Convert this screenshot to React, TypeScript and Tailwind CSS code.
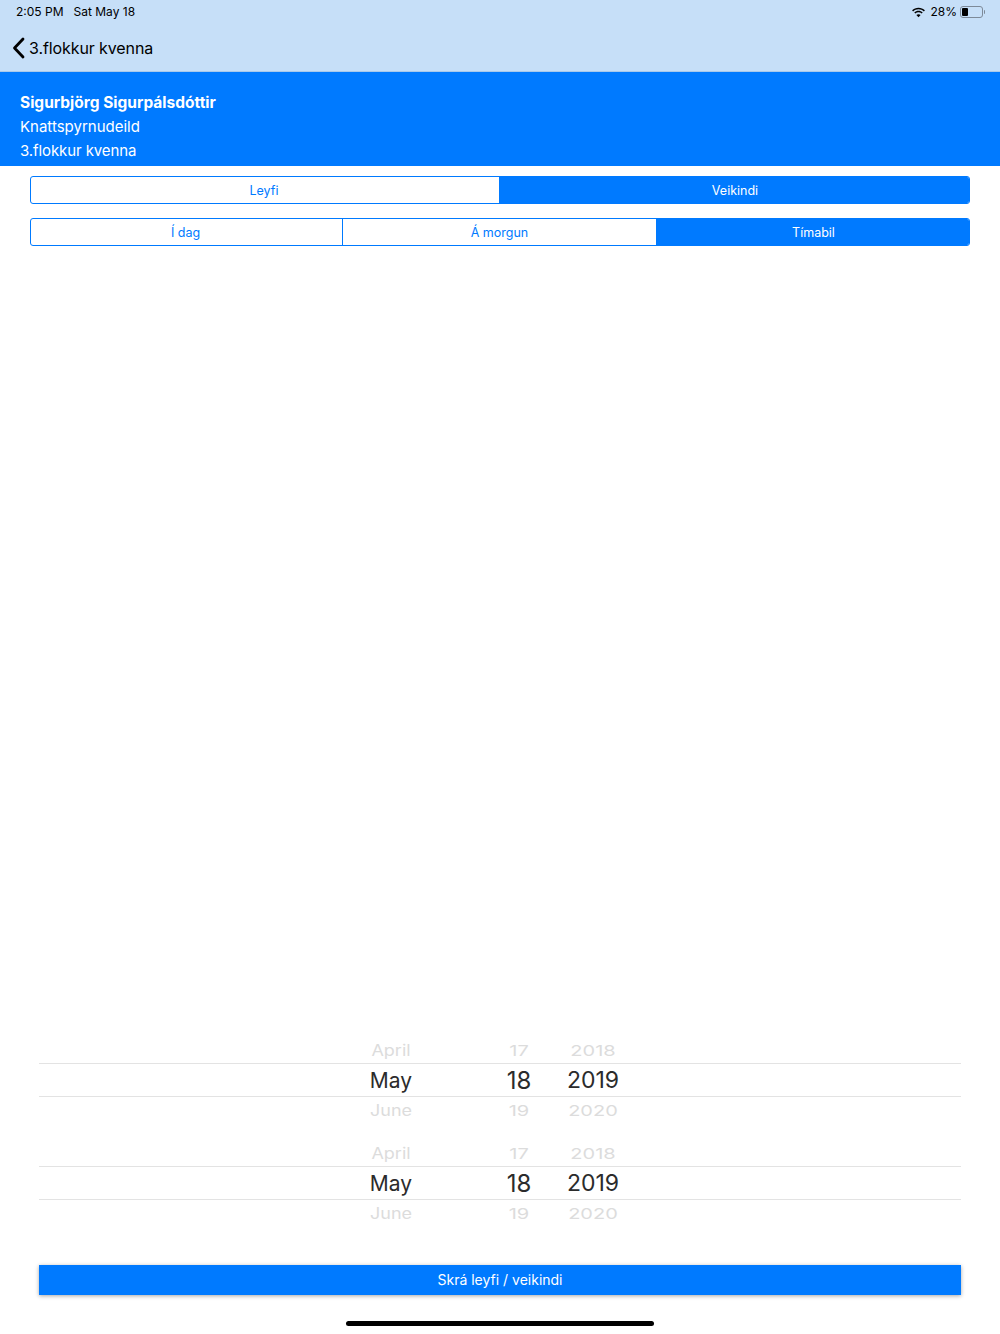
import { ReactNode } from "react";

function WifiIcon() {
  return (
    <svg className="mr-[1px]" width="15" height="11" viewBox="0 0 15 11" fill="#000">
      <path d="M7.5 2.3c2.1 0 4 .8 5.4 2.1l1-1.1C12.2 1.7 10 .8 7.5.8S2.8 1.7 1.1 3.300l1 1.100C3.500 3.100 5.400 2.300 7.500 2.300z" />
      <path d="M7.500 5.300c1.200 0 2.300.5 3.200 1.200l1-1.100C10.500 4.400 9.100 3.800 7.500 3.800s-3 .6-4.200 1.600l1 1.100c.9-.7 2-1.200 3.200-1.200z" />
      <path d="M7.500 10.300 9.600 8c-.6-.5-1.300-.8-2.100-.8s-1.500.3-2.100.8z" />
    </svg>
  );
}

function Battery() {
  return (
    <div className="flex items-center">
      <div className="flex h-[12px] w-[23px] items-center rounded-[3px] border border-[#7d8a99] p-[1px]">
        <div className="h-full w-[6px] rounded-[1px] bg-black" />
      </div>
      <div className="ml-[1px] h-[4px] w-[1px] rounded-r bg-[#7d8a99]" />
    </div>
  );
}

function Segment({ active, divider, className, children }: { active?: boolean; divider?: boolean; className: string; children: ReactNode }) {
  return (
    <div
      className={`flex items-center justify-center pt-[2px] text-[12.500px] ${className} ${active ? "bg-[#007aff] text-white" : "text-[#007aff]"} ${divider ? "border-r border-[#007aff]" : ""}`}
    >
      {children}
    </div>
  );
}

function PickerRow({ month, day, year, kind }: { month: string; day: string; year: string; kind: "top" | "mid" | "bottom" }) {
  if (kind === "mid") {
    return (
      <div className="flex h-[34px] items-center border-y border-[#e3e3e3] pl-[301px] pt-[1px] text-[23px] text-[#2b2b2b]">
        <span className="w-[102px] text-center text-[21px]">{month}</span>
        <span className="ml-[32px] w-[90px] text-center text-[24px]">{day}</span>
        <span className="w-[58px] text-center">{year}</span>
      </div>
    );
  }
  return (
    <div
      className={
        kind === "top"
          ? "flex h-[23px] items-end overflow-hidden pb-[1px] pl-[301px] text-[20px] leading-[22px] text-[#dcdcdc]"
          : "flex h-[23px] items-start overflow-hidden pt-[3px] pl-[301px] text-[20px] leading-[22px] text-[#dcdcdc]"
      }
    >
      <span className="w-[102px] origin-center scale-y-[0.85] text-center text-[18px]">{month}</span>
      <span className="ml-[32px] w-[90px] origin-center scale-y-[0.75] text-center">{day}</span>
      <span className="w-[58px] origin-center scale-y-[0.75] text-center">{year}</span>
    </div>
  );
}

function DatePicker() {
  return (
    <div className="flex flex-col">
      <PickerRow kind="top" month="April" day="17" year="2018" />
      <PickerRow kind="mid" month="May" day="18" year="2019" />
      <PickerRow kind="bottom" month="June" day="19" year="2020" />
    </div>
  );
}

export default function App() {
  return (
    <div className="flex h-[1334px] w-[1000px] flex-col overflow-hidden bg-white font-['Inter',sans-serif]">
      <header className="h-[72px] border-b border-[#a9c9ea] bg-[#c6dff8] text-black">
        <div className="flex h-[24px] items-center justify-between pl-[16px] pr-[15px] text-[12px]">
          <div className="flex gap-[10px]">
            <span>2:05 PM</span>
            <span>Sat May 18</span>
          </div>
          <div className="flex items-center gap-[3px]">
            <WifiIcon />
            <span>28%</span>
            <Battery />
          </div>
        </div>
        <div className="flex h-[47px] items-center pl-[12px]">
          <svg width="13" height="22" viewBox="0 0 13 22" fill="none" stroke="#000" strokeWidth="2.800" strokeLinecap="round" strokeLinejoin="round">
            <path d="M11 2 2.500 11 11 20" />
          </svg>
          <span className="ml-[4px] pt-[1px] text-[16px] tracking-[-0.1px]">3.flokkur kvenna</span>
        </div>
      </header>

      <section className="flex h-[94px] flex-col justify-center bg-[#007aff] pl-[20px] pt-[16px] text-[15px] leading-[24px] text-white">
        <div className="text-[15.500px] font-bold">Sigurbjörg Sigurpálsdóttir</div>
        <div>Knattspyrnudeild</div>
        <div className="tracking-[-0.1px]">3.flokkur kvenna</div>
      </section>

      <div className="mx-[30px] mt-[10px] flex h-[28px] overflow-hidden rounded-[3px] border border-[#007aff]">
        <Segment className="w-[468px] pr-[2px]">Leyfi</Segment>
        <Segment active className="flex-1 pl-[2px]">Veikindi</Segment>
      </div>

      <div className="mx-[30px] mt-[14px] flex h-[28px] overflow-hidden rounded-[3px] border border-[#007aff]">
        <Segment divider className="w-[312px] pr-[2px]">Í dag</Segment>
        <Segment className="w-[313px]">Á morgun</Segment>
        <Segment active className="flex-1 pl-[2px]">Tímabil</Segment>
      </div>

      <div className="flex-1" />

      <div className="mx-[39px] flex flex-col gap-[23px]">
        <DatePicker />
        <DatePicker />
      </div>

      <button className="mx-[39px] mt-[42px] h-[30px] bg-[#007aff] pb-[1px] text-[14px] text-white shadow-[0_1px_4px_rgba(0,0,0,0.35)]">
        Skrá leyfi / veikindi
      </button>

      <div className="mb-[8px] mt-[26px] flex justify-center">
        <div className="h-[5px] w-[308px] rounded-full bg-black" />
      </div>
    </div>
  );
}
